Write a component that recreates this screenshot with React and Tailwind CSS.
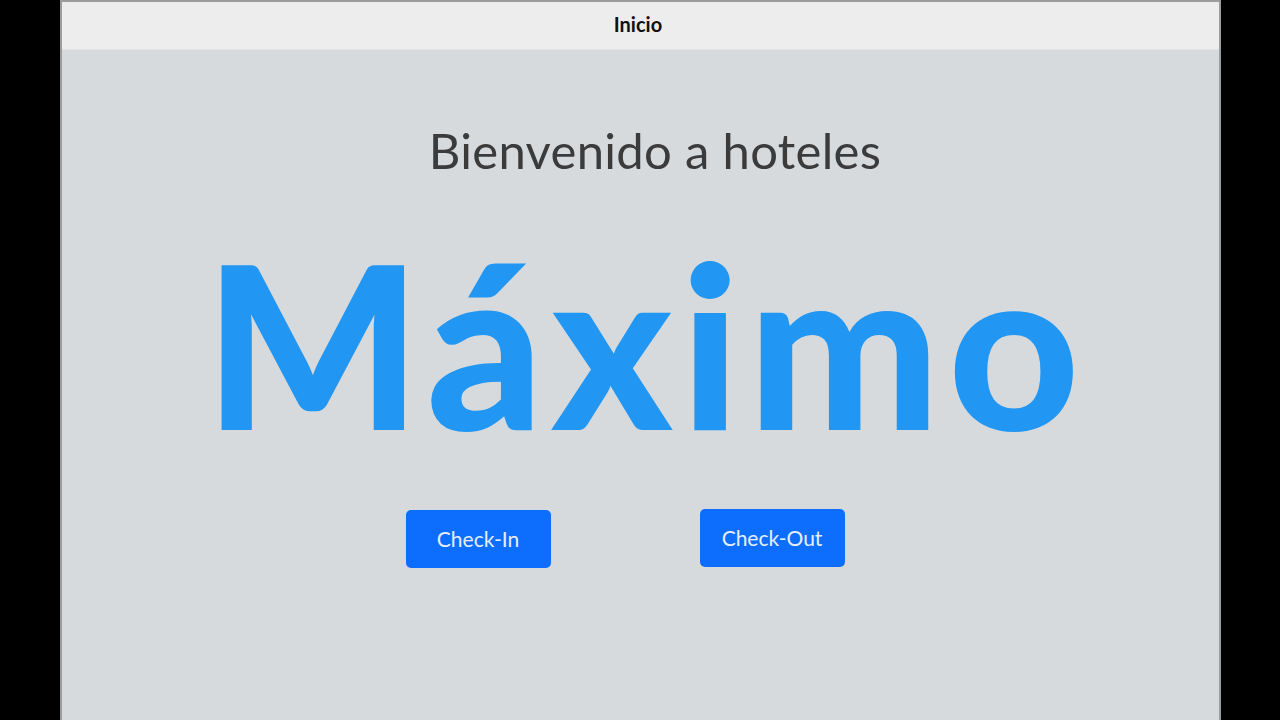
import React from "react";

const font = { fontFamily: "Lato, 'Open Sans', sans-serif" };

const App = () => {
    return (
        <div className="w-full h-[720px] bg-black flex justify-center overflow-hidden" style={font}>
            <div className="w-[1161px] h-full flex flex-col bg-[#d6dadd] border-x-2 border-t-2 border-[#9c9c9c]">
                <div className="h-[48px] shrink-0 flex items-center justify-center bg-[#ededed] border-b border-[#e2e2e2]">
                    <span className="pr-[4px] pb-[4px] text-[20px] font-bold text-[#111]">Inicio</span>
                </div>

                <div className="flex-1 flex flex-col items-center">
                    <h1 className="mt-[76px] pl-[30px] text-[49px] tracking-[0.3px] leading-none text-[#3b3b3b]">Bienvenido a hoteles</h1>

                    <p className="mt-[53px] pl-[12px] text-[228px] tracking-[8px] leading-none font-black text-[#2196f3]">Máximo</p>

                    <div className="mt-[53px] pr-[30px] flex gap-[149px]">
                        <button className="w-[145px] h-[58px] mt-[1px] rounded-[5px] bg-[#0d6efd] text-[21px] text-[#e6eeff]">Check-In</button>
                        <button className="w-[145px] h-[58px] rounded-[5px] bg-[#0d6efd] text-[21px] text-[#e6eeff]">Check-Out</button>
                    </div>
                </div>
            </div>
        </div>
    );
};

export default App;
